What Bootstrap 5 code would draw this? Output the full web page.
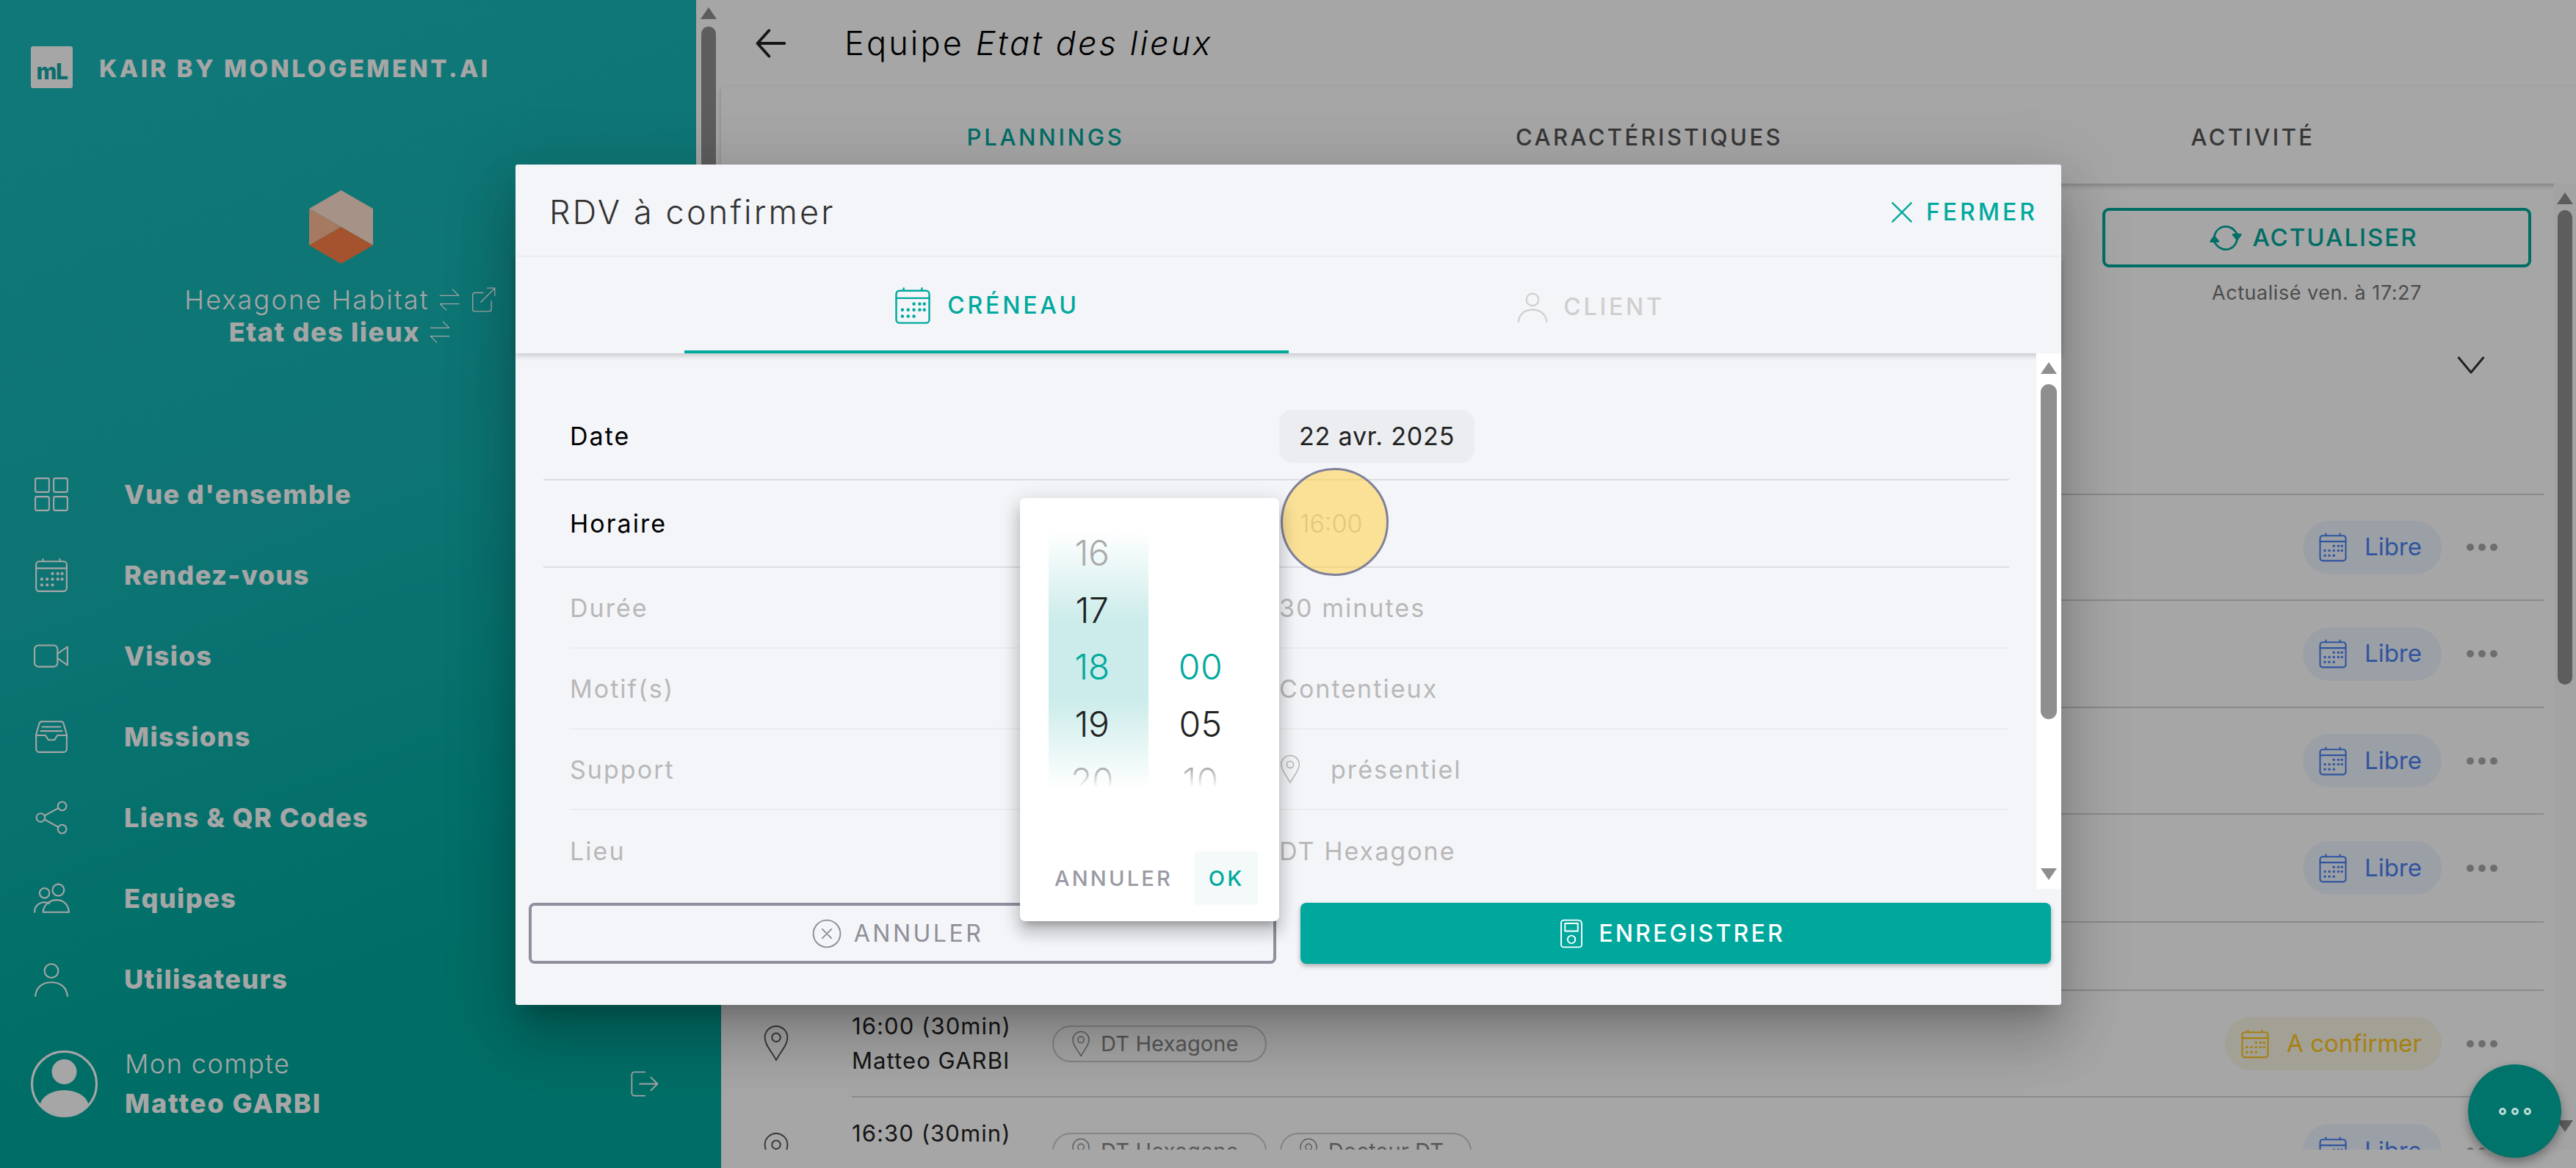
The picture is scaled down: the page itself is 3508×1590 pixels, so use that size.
<!DOCTYPE html>
<html lang="fr">
<head>
<meta charset="utf-8">
<title>RDV à confirmer</title>
<link href="https://cdn.jsdelivr.net/npm/bootstrap@5.3.0/dist/css/bootstrap.min.css" rel="stylesheet">
<style>
html,body{width:3508px;height:1590px;margin:0;overflow:hidden}
body{font-family:"Inter","Liberation Sans",sans-serif;font-size:34px;letter-spacing:.06em;color:#000;background:#fff}
svg{display:block;flex:none;fill:none;stroke:currentColor;stroke-width:1.5;stroke-linecap:round;stroke-linejoin:round}
.shell{width:3508px;height:1590px}
.side{width:982px;height:1590px;flex:none;color:#fff;background:linear-gradient(160deg,#1bbaba 0%,#13b2b0 45%,#00a99d 78%)}
.side-bar{top:0;right:0;width:34px;height:240px;background:#fff}
.brand{padding:63px 0 0 42px;height:259px;gap:36px}
.mark{width:57px;height:57px;border-radius:3px;background:#fff;color:#13a8a8;font-size:30px;font-weight:800;letter-spacing:-.05em;padding-top:16px;text-align:center;line-height:36px}
.brand-name{font-size:33px;font-weight:800;letter-spacing:.105em;margin-top:6px}
.org{height:295px;width:928px}
.org-a{margin-top:27px;font-size:36px;font-weight:300;gap:10px;height:44px;letter-spacing:.06em}
.org-b{font-size:36px;font-weight:800;gap:10px;height:44px;letter-spacing:.045em}
.swap-ico{width:34px;height:40px;stroke-width:.85}
.ext-ico{width:38px;height:38px;stroke-width:.85}
.hex{width:87px;height:100px;stroke:none}
.nav-rows{padding-left:45px;margin-top:64px}
.nav-one{height:110px;font-size:36px;font-weight:800;letter-spacing:.04em}
.nav-one svg{width:50px;height:50px;stroke-width:1}
.nav-one span{margin-left:74px}
.acct{padding:0 84px 0 42px;margin-top:42px;height:90px}
.acct-txt{margin-left:37px;line-height:54px;font-size:36px}
.acct-txt b{font-weight:800;display:block;letter-spacing:.055em}
.acct-txt i{font-style:normal;font-weight:300;display:block;letter-spacing:.04em}
.bar-thumb{background:#8f8f8f;border-radius:12px;position:absolute}
.arrow-up,.arrow-dn{position:absolute;left:50%;margin-left:-11px;width:0;height:0;border-left:11px solid transparent;border-right:11px solid transparent}
.arrow-up{border-bottom:16px solid #8f8f8f}
.arrow-dn{border-top:16px solid #8f8f8f}
.page{min-width:0;height:1590px}
.topline{height:118px;gap:80px;padding-left:46px;font-size:45px;font-weight:300;letter-spacing:.07em}
.topline svg{width:42px;height:42px;stroke-width:2.2;color:#222}
.page-tabs{height:132px;padding:0 29px 0 31px;box-shadow:0 3px 6px rgba(0,0,0,.22);position:relative}
.page-tab{flex:1 1 0;text-align:center;font-size:31px;font-weight:500;letter-spacing:.11em;padding-top:46px;color:#555}
.page-tab.on{color:#00a99d;letter-spacing:.12em}
.scroller{height:1315px;overflow:hidden;position:relative}
.scroller-bar{top:0;right:0;bottom:0;width:30px;background:#fafafa}
.tools{height:422px;padding:33px 61px 0 0;align-items:flex-end}
.refresh{width:584px;height:81px;border:4px solid #00a99d;border-radius:9px;color:#00a99d;font-size:33px;font-weight:500;letter-spacing:.06em;gap:14px;padding-right:8px}
.refresh svg{width:44px;height:44px}
.stamp{font-size:27px;font-weight:400;color:#777;letter-spacing:.02em;margin-top:15px;width:584px;text-align:center}
.chev{width:40px;height:40px;color:#333;stroke-width:1.8;margin:57px 62px 0 0}
.lrow{width:2482px}
.gut{width:178px;flex:none;padding-left:56px;color:#555}
.gut svg{width:38px;height:50px;stroke-width:1}
.lbody{flex:1 1 auto;border-top:2px solid #d4d4d4;min-width:0}
.who{width:273px;font-size:31px;line-height:47px;letter-spacing:.035em;color:#222;margin-top:-2px;white-space:nowrap}
.chip{height:50px;border:2px solid #ccc;border-radius:25px;color:#888;font-size:29px;gap:14px;padding:0 36px 0 24px;margin-right:18px;letter-spacing:.005em;white-space:nowrap}
.chip svg{width:26px;height:36px;stroke-width:1}
.stat{height:73px;border-radius:37px;gap:22px;padding:0 27px 0 20px;font-size:33px;letter-spacing:0;font-weight:400;margin-left:auto}
.stat svg{width:42px;height:46px;stroke-width:1.2}
.stat-free{background:#eef6ff;color:#4a82f5}
.stat-wait{background:#faf6e6;color:#ffc61c}
.dots{gap:6px;margin:0 63px 0 34px;color:#aaa}
.dots i{display:block;width:10px;height:10px;border-radius:50%;background:currentColor}
.dim{inset:0;background:rgba(0,0,0,.35)}
.fab{left:3361px;top:1449px;width:127px;height:127px;border-radius:50%;background:#00736b;gap:7px;box-shadow:0 6px 14px rgba(0,0,0,.35)}
.fab i{display:block;width:10px;height:10px;border:3px solid #bcd9d6;border-radius:50%}
.dlg{left:702px;top:224px;width:2105px;height:1144px;background:#f4f5f9;border-radius:3px;box-shadow:0 22px 30px -14px rgba(0,0,0,.2),0 48px 76px 6px rgba(0,0,0,.14),0 18px 92px 16px rgba(0,0,0,.12)}
.dlg-head{height:126px;padding:4px 32px 0 46px;align-items:center}
.dlg-title{font-size:45px;font-weight:300;letter-spacing:.07em;color:#333}
.close-link{color:#00a99d;font-size:32px;font-weight:500;letter-spacing:.125em;gap:14px}
.close-link svg{width:38px;height:38px;stroke-width:1.5}
.dlg-tabs{height:131px;box-shadow:0 3px 8px rgba(0,0,0,.2);position:relative}
.dlg-tab{width:823px;height:131px;font-size:32px;font-weight:500;letter-spacing:.12em;gap:20px;color:#cfcfcf;padding-top:4px}
.dlg-tab svg{width:54px;height:54px;stroke-width:1.1}
.dlg-tab .who-ico{width:44px;height:48px;stroke-width:1.2}
.dlg-tab.on{color:#00a99d;border-bottom:4px solid #00a99d}
.dlg-body{height:729px}
.fields{flex:1 1 auto;padding:54px 37px 0 38px;min-width:0}
.fld{align-items:center;height:119px;border-bottom:2px solid #dcdde0}
.fld.off{height:110px;color:#b8b8b8;border:0;margin-left:36px;border-bottom:2px solid #ebecee}
.fld.off:last-child{border:0}
.fld-k{width:1002px;padding-left:36px}
.fld.off .fld-k{padding-left:0;width:966px}
.date-pill{background:#ecedf0;border-radius:18px;height:72px;padding:0 27px;color:#222;letter-spacing:.024em}
.time-off{padding-left:28px;color:#bdbdbd;letter-spacing:.0em;font-weight:300}
.fld-pin{gap:40px}
.fld-pin svg{width:30px;height:40px;stroke-width:1}
.dlg-bar{width:34px;flex:none;position:relative;background:#fff}
.dlg-foot{gap:33px;padding:19px 14px 0 18px}
.act{height:83px;border-radius:8px;font-size:32px;font-weight:500;letter-spacing:.1em;gap:16px;flex:1 1 0;padding-right:14px}
.act svg{width:42px;height:42px;stroke-width:1.1}
.act-ghost{flex:0 0 1018px;border:4px solid #8f8f9e;color:#8f8f97;font-weight:400;letter-spacing:.11em}
.act-main{background:#00a79d;color:#fff;box-shadow:0 3px 6px rgba(0,0,0,.3)}
.spot{left:1042px;top:413px;width:147px;height:147px;border-radius:50%;background:rgba(255,208,70,.55);border:3px solid #80809a}
.picker{left:687px;top:454px;width:353px;height:576px;background:#fff;border-radius:7px;box-shadow:0 10px 10px -6px rgba(0,0,0,.2),0 16px 20px 2px rgba(0,0,0,.14),0 6px 28px 4px rgba(0,0,0,.12)}
.wheels{height:351px;padding:45px 0 0 39px;box-sizing:content-box;position:relative}
.wheel{width:136px;height:351px;font-size:48px;font-weight:300;letter-spacing:-.01em;text-align:center;overflow:hidden;color:#222;line-height:77.5px}
.wheel-h{background:linear-gradient(180deg,#fff 0%,#cbecea 35%,#cbecea 65%,#fff 100%);padding-right:18px}
.wheel-m{margin-left:6px;width:130px;letter-spacing:.01em}
.wheel div{height:77.5px}
.wheel div:first-child{margin-top:-9px}
.wheel .sel{color:#00a99d}
.wheel .far{color:#aaa}
.wheel .gone{background:linear-gradient(180deg,#999 20%,#fff 62%);-webkit-background-clip:text;background-clip:text;color:transparent}
.wheel .blank{visibility:hidden}
.pick-foot{height:73px;margin-top:85px;padding:0 29px 0 47px;font-size:29px;font-weight:500;letter-spacing:.11em;color:#9a9aa5;align-items:center;justify-content:space-between}
.ok{width:86px;height:73px;background:#f4faf9;color:#00a99d;border-radius:3px}
</style>
</head>
<body class="position-relative">
<svg width="0" height="0" style="position:absolute">
<defs>
<symbol id="i-grid" viewBox="0 0 24 24"><rect x="1.5" y="1.5" width="9" height="9" rx="1"/><rect x="13.5" y="1.5" width="9" height="9" rx="1"/><rect x="1.5" y="13.5" width="9" height="9" rx="1"/><rect x="13.5" y="13.5" width="9" height="9" rx="1"/></symbol>
<symbol id="i-cal" viewBox="0 0 24 24"><rect x="2" y="3" width="20" height="19.5" rx="2"/><path d="M2 7.5h20M6.5 1.5V3M17.5 1.5V3"/><g fill="currentColor" stroke="none"><circle cx="5.7" cy="14.6" r="1"/><circle cx="9.2" cy="14.6" r="1"/><circle cx="12.7" cy="14.6" r="1"/><circle cx="16.2" cy="14.6" r="1"/><circle cx="12.7" cy="11" r="1"/><circle cx="16.2" cy="11" r="1"/><circle cx="19" cy="11" r="1"/><circle cx="19" cy="14.6" r="1"/><circle cx="5.7" cy="18.4" r="1"/><circle cx="9.2" cy="18.4" r="1"/><circle cx="12.7" cy="18.4" r="1"/></g></symbol>
<symbol id="i-video" viewBox="0 0 24 24"><rect x="1" y="5" width="15" height="14" rx="2.5"/><path d="M16 10.5 22.5 6v12L16 13.5"/></symbol>
<symbol id="i-inbox" viewBox="0 0 24 24"><path d="M2 10.5 4 3.5a2 2 0 0 1 2-1.5h12a2 2 0 0 1 2 1.5l2 7V20a2 2 0 0 1-2 2H4a2 2 0 0 1-2-2z"/><path d="M2 11h6l2 3h4l2-3h6M6 5.5h12M5 8.2h14"/></symbol>
<symbol id="i-share" viewBox="0 0 24 24"><circle cx="19" cy="4.5" r="2.8"/><circle cx="5" cy="12" r="2.8"/><circle cx="19" cy="19.5" r="2.8"/><path d="M7.5 10.7 16.5 5.8M7.5 13.3 16.5 18.2"/></symbol>
<symbol id="i-team" viewBox="0 0 24 24"><circle cx="7.5" cy="8.5" r="3.2"/><circle cx="16.5" cy="6.5" r="3.8"/><path d="M1 21c0-4 3-6.500 6.500-6.500 1.200 0 2.300.3 3.200.8"/><path d="M7 21c.4-5 4.500-8 9-8s7.500 3 8 8z" transform="translate(-.5 0)"/></symbol>
<symbol id="i-user" viewBox="0 0 24 24"><circle cx="12" cy="6.500" r="4.500"/><path d="M1.500 23c.5-6 5-9 10.500-9s10 3 10.500 9"/></symbol>
<symbol id="i-logout" viewBox="0 0 24 24"><path d="M13 3H5a2 2 0 0 0-2 2v14a2 2 0 0 0 2 2h8"/><path d="M9 12h13M17.500 7l5 5-5 5"/></symbol>
<symbol id="i-swap" viewBox="0 0 24 24"><path d="M3 8h18M15 2l6 6M21 16H3M9 22l-6-6"/></symbol>
<symbol id="i-ext" viewBox="0 0 24 24"><path d="M19 13v7a2 2 0 0 1-2 2H5a2 2 0 0 1-2-2V8a2 2 0 0 1 2-2h7"/><path d="M10 14 22 2M15.500 2H22v6.500"/></symbol>
<symbol id="i-back" viewBox="0 0 24 24"><path d="M23 12H2M11 2 2 12l9 10"/></symbol>
<symbol id="i-chev" viewBox="0 0 24 24"><path d="M2 6l10 12L22 6"/></symbol>
<symbol id="i-sync" viewBox="0 0 24 24"><path d="M3.500 12a8.500 8.500 0 0 1 15-5.500l2 2.500"/><path d="M20.500 12a8.500 8.500 0 0 1-15 5.500l-2-2.500"/><path d="M23 9.500h-5.500l3 3.500zM1 14.500h5.500l-3-3.500z" fill="currentColor"/></symbol>
<symbol id="i-x" viewBox="0 0 24 24"><path d="M4 4l16 16M20 4 4 20"/></symbol>
<symbol id="i-xc" viewBox="0 0 24 24"><circle cx="12" cy="12" r="10.500"/><path d="M8.500 8.500l7 7M15.500 8.500l-7 7"/></symbol>
<symbol id="i-save" viewBox="0 0 24 24"><path d="M6 1.500h11c2 0 3 1 3 3v16a2 2 0 0 1-2 2H6a2 2 0 0 1-2-2v-17a2 2 0 0 1 2-2z"/><rect x="7" y="4" width="10" height="6"/><circle cx="12" cy="16.500" r="3"/></symbol>
<symbol id="i-pin" viewBox="0 0 18 26"><path d="M9 25C6 19 1 14.500 1 9a8 8 0 0 1 16 0c0 5.500-5 10-8 16z"/><circle cx="9" cy="9" r="3"/></symbol>
</defs>
</svg>

<div class="shell d-flex">
  <aside class="side d-flex flex-column position-relative">
    <div class="side-bar position-absolute"><div class="arrow-up" style="top:10px"></div><div class="bar-thumb" style="left:7px;width:20px;top:36px;height:300px"></div></div>
    <div class="brand d-flex align-items-start">
      <div class="mark">mL</div>
      <div class="brand-name">KAIR BY MONLOGEMENT.AI</div>
    </div>
    <div class="org d-flex flex-column align-items-center">
      <svg class="hex" viewBox="0 0 87 100"><polygon fill="#ffe0d0" points="43.500,0 87,25 87,75 43.500,50 0,25"/><polygon fill="#ffbc94" points="0,25 43.500,50 0,75"/><polygon fill="#fe8048" points="43.500,50 87,75 43.500,100 0,75"/></svg>
      <div class="org-a d-flex align-items-center"><span>Hexagone Habitat</span><svg class="swap-ico"><use href="#i-swap"/></svg><svg class="ext-ico"><use href="#i-ext"/></svg></div>
      <div class="org-b d-flex align-items-center"><span>Etat des lieux</span><svg class="swap-ico"><use href="#i-swap"/></svg></div>
    </div>
    <nav class="nav-rows">
      <div class="nav-one d-flex align-items-center"><svg><use href="#i-grid"/></svg><span>Vue d'ensemble</span></div>
      <div class="nav-one d-flex align-items-center"><svg><use href="#i-cal"/></svg><span>Rendez-vous</span></div>
      <div class="nav-one d-flex align-items-center"><svg><use href="#i-video"/></svg><span>Visios</span></div>
      <div class="nav-one d-flex align-items-center"><svg><use href="#i-inbox"/></svg><span>Missions</span></div>
      <div class="nav-one d-flex align-items-center"><svg><use href="#i-share"/></svg><span>Liens &amp; QR Codes</span></div>
      <div class="nav-one d-flex align-items-center"><svg><use href="#i-team"/></svg><span>Equipes</span></div>
      <div class="nav-one d-flex align-items-center"><svg><use href="#i-user"/></svg><span>Utilisateurs</span></div>
    </nav>
    <div class="acct d-flex align-items-center">
      <svg width="91" height="91" viewBox="0 0 91 91" style="stroke-width:3"><defs><clipPath id="avc"><circle cx="45.500" cy="45.500" r="43"/></clipPath></defs><circle cx="45.500" cy="45.500" r="44"/><g clip-path="url(#avc)" fill="#fff" stroke="none"><circle cx="45.500" cy="29" r="17"/><ellipse cx="45.500" cy="76" rx="33" ry="22"/></g></svg>
      <div class="acct-txt flex-grow-1"><i>Mon compte</i><b>Matteo GARBI</b></div>
      <svg width="43" height="43" style="stroke-width:1"><use href="#i-logout"/></svg>
    </div>
  </aside>

  <main class="page flex-grow-1 d-flex flex-column">
    <div class="topline d-flex align-items-center"><svg><use href="#i-back"/></svg><div>Equipe <em>Etat des lieux</em></div></div>
    <div class="page-tabs d-flex">
      <div class="page-tab on">PLANNINGS</div>
      <div class="page-tab">CARACTÉRISTIQUES</div>
      <div class="page-tab">ACTIVITÉ</div>
    </div>
    <div class="scroller">
      <div class="scroller-bar position-absolute"><div class="arrow-up" style="top:12px"></div><div class="bar-thumb" style="left:5px;width:20px;top:36px;height:646px"></div><div class="arrow-dn" style="bottom:24px"></div></div>
      <div class="tools d-flex flex-column">
        <div class="refresh d-flex align-items-center justify-content-center"><svg><use href="#i-sync"/></svg>ACTUALISER</div>
        <div class="stamp">Actualisé ven. à 17:27</div>
        <svg class="chev"><use href="#i-chev"/></svg>
      </div>
      <div class="lrow d-flex" style="height:144px"><div class="gut"></div><div class="lbody d-flex align-items-center"><div class="stat stat-free d-flex align-items-center"><svg><use href="#i-cal"/></svg>Libre</div><div class="dots d-flex"><i></i><i></i><i></i></div></div></div>
      <div class="lrow d-flex" style="height:146px"><div class="gut"></div><div class="lbody d-flex align-items-center"><div class="stat stat-free d-flex align-items-center"><svg><use href="#i-cal"/></svg>Libre</div><div class="dots d-flex"><i></i><i></i><i></i></div></div></div>
      <div class="lrow d-flex" style="height:145px"><div class="gut"></div><div class="lbody d-flex align-items-center"><div class="stat stat-free d-flex align-items-center"><svg><use href="#i-cal"/></svg>Libre</div><div class="dots d-flex"><i></i><i></i><i></i></div></div></div>
      <div class="lrow d-flex" style="height:147px"><div class="gut"></div><div class="lbody d-flex align-items-center"><div class="stat stat-free d-flex align-items-center"><svg><use href="#i-cal"/></svg>Libre</div><div class="dots d-flex"><i></i><i></i><i></i></div></div></div>
      <div class="lrow d-flex" style="height:93px"><div class="gut"></div><div class="lbody"></div></div>
      <div class="lrow d-flex" style="height:145px"><div class="gut d-flex align-items-center"><svg><use href="#i-pin"/></svg></div><div class="lbody d-flex align-items-center"><div class="who">16:00 (30min)<br>Matteo GARBI</div><div class="chip d-flex align-items-center"><svg><use href="#i-pin"/></svg>DT Hexagone</div><div class="stat stat-wait d-flex align-items-center"><svg><use href="#i-cal"/></svg>A confirmer</div><div class="dots d-flex"><i></i><i></i><i></i></div></div></div>
      <div class="lrow d-flex" style="height:147px"><div class="gut d-flex align-items-center"><svg><use href="#i-pin"/></svg></div><div class="lbody d-flex align-items-center"><div class="who">16:30 (30min)<br>Matteo GARBI</div><div class="chip d-flex align-items-center"><svg><use href="#i-pin"/></svg>DT Hexagone</div><div class="chip d-flex align-items-center"><svg><use href="#i-pin"/></svg>Docteur DT</div><div class="stat stat-free d-flex align-items-center"><svg><use href="#i-cal"/></svg>Libre</div><div class="dots d-flex"><i></i><i></i><i></i></div></div></div>
    </div>
  </main>
</div>

<div class="dim position-absolute"></div>
<div class="fab position-absolute d-flex align-items-center justify-content-center"><i></i><i></i><i></i></div>

<section class="dlg position-absolute d-flex flex-column">
  <div class="dlg-head d-flex justify-content-between">
    <div class="dlg-title">RDV à confirmer</div>
    <div class="close-link d-flex align-items-center"><svg><use href="#i-x"/></svg>FERMER</div>
  </div>
  <div class="dlg-tabs d-flex justify-content-center">
    <div class="dlg-tab on d-flex align-items-center justify-content-center"><svg><use href="#i-cal"/></svg>CRÉNEAU</div>
    <div class="dlg-tab d-flex align-items-center justify-content-center"><svg class="who-ico"><use href="#i-user"/></svg>CLIENT</div>
  </div>
  <div class="dlg-body d-flex">
    <div class="fields">
      <div class="fld d-flex"><div class="fld-k">Date</div><div class="fld-v date-pill d-flex align-items-center">22 avr. 2025</div></div>
      <div class="fld d-flex"><div class="fld-k">Horaire</div><div class="fld-v time-off">16:00</div></div>
      <div class="fld off d-flex"><div class="fld-k">Durée</div><div class="fld-v">30 minutes</div></div>
      <div class="fld off d-flex"><div class="fld-k">Motif(s)</div><div class="fld-v">Contentieux</div></div>
      <div class="fld off d-flex"><div class="fld-k">Support</div><div class="fld-v fld-pin d-flex align-items-center"><svg><use href="#i-pin"/></svg>présentiel</div></div>
      <div class="fld off d-flex"><div class="fld-k">Lieu</div><div class="fld-v">DT Hexagone</div></div>
    </div>
    <div class="dlg-bar"><div class="arrow-up" style="top:12px"></div><div class="bar-thumb" style="left:6px;width:22px;top:42px;height:456px"></div><div class="arrow-dn" style="bottom:12px"></div></div>
  </div>
  <div class="dlg-foot d-flex">
    <div class="act act-ghost d-flex align-items-center justify-content-center"><svg><use href="#i-xc"/></svg>ANNULER</div>
    <div class="act act-main d-flex align-items-center justify-content-center"><svg><use href="#i-save"/></svg>ENREGISTRER</div>
  </div>
  <div class="spot position-absolute"></div>
  <div class="picker position-absolute">
    <div class="wheels d-flex">
      <div class="wheel wheel-h"><div class="far">16</div><div>17</div><div class="sel">18</div><div>19</div><div class="gone">20</div></div>
      <div class="wheel wheel-m"><div class="blank">50</div><div class="blank">55</div><div class="sel">00</div><div>05</div><div class="gone">10</div></div>
    </div>
    <div class="pick-foot d-flex"><span>ANNULER</span><span class="ok d-flex align-items-center justify-content-center">OK</span></div>
  </div>
</section>
<script src="https://cdn.jsdelivr.net/npm/bootstrap@5.3.0/dist/js/bootstrap.bundle.min.js"></script>
</body>
</html>
